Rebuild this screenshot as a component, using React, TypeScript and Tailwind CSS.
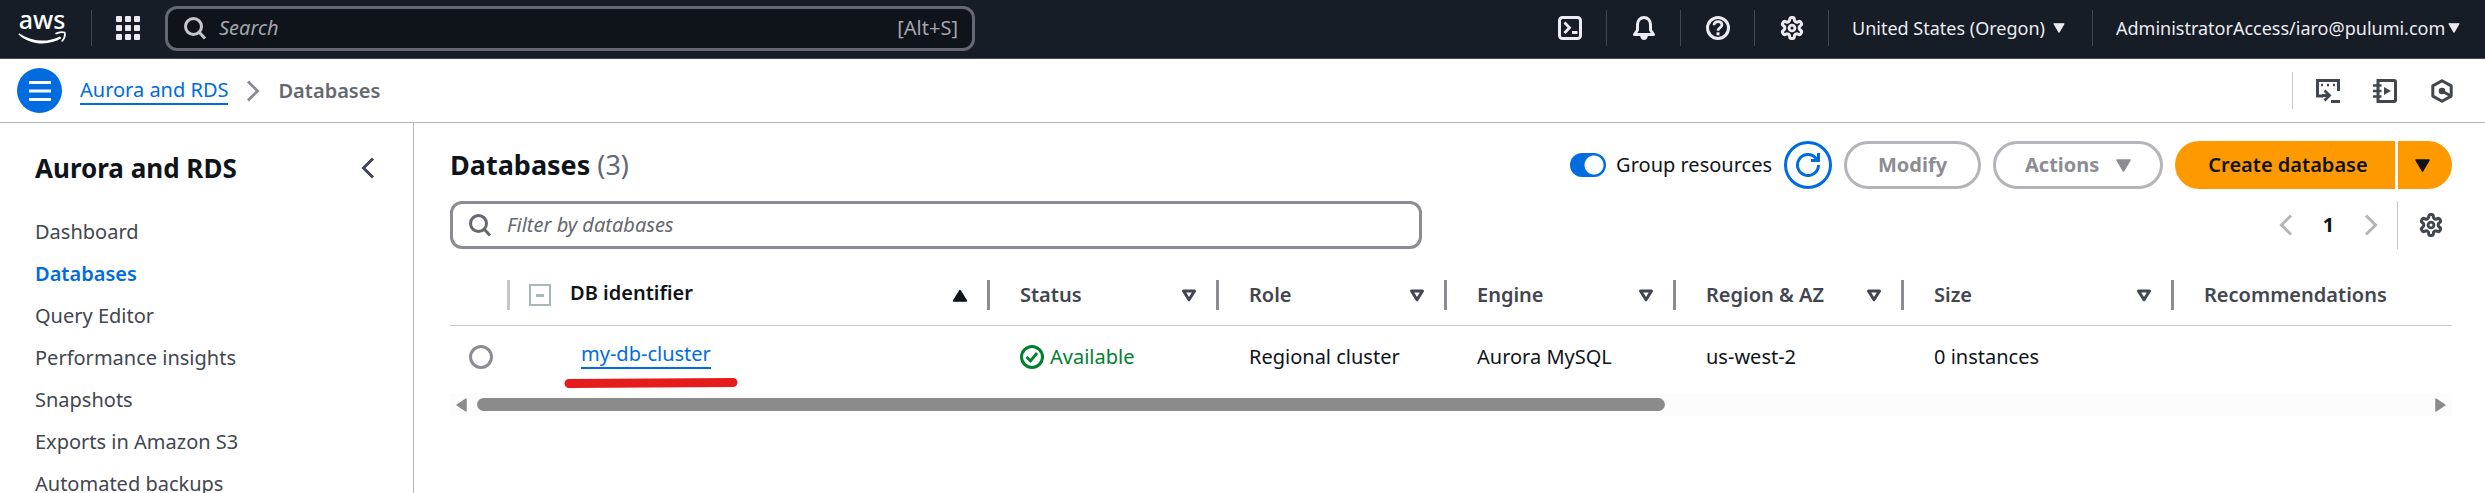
import React from "react";

const GEAR =
  "M12.22 2h-.44a2 2 0 0 0-2 2v.18a2 2 0 0 1-1 1.73l-.43.25a2 2 0 0 1-2 0l-.15-.08a2 2 0 0 0-2.73.73l-.22.38a2 2 0 0 0 .73 2.73l.15.1a2 2 0 0 1 1 1.72v.51a2 2 0 0 1-1 1.74l-.15.09a2 2 0 0 0-.73 2.73l.22.38a2 2 0 0 0 2.73.73l.15-.08a2 2 0 0 1 2 0l.43.25a2 2 0 0 1 1 1.73V20a2 2 0 0 0 2 2h.44a2 2 0 0 0 2-2v-.18a2 2 0 0 1 1-1.73l.43-.25a2 2 0 0 1 2 0l.15.08a2 2 0 0 0 2.73-.73l.22-.39a2 2 0 0 0-.73-2.73l-.15-.08a2 2 0 0 1-1-1.74v-.5a2 2 0 0 1 1-1.74l.15-.09a2 2 0 0 0 .73-2.73l-.22-.38a2 2 0 0 0-2.73-.73l-.15.08a2 2 0 0 1-2 0l-.43-.25a2 2 0 0 1-1-1.73V4a2 2 0 0 0-2-2z";

type IconProps = { children: React.ReactNode; className?: string };

function Icon({ children, className = "" }: IconProps) {
  return (
    <svg
      viewBox="0 0 24 24"
      className={`size-6 shrink-0 ${className}`}
      fill="none"
      stroke="currentColor"
      strokeWidth="3"
      aria-hidden="true"
    >
      {children}
    </svg>
  );
}

const GearIcon = () => (
  <Icon>
    <g transform="translate(12 12) scale(1.05) translate(-12 -12)">
      <path d={GEAR} strokeWidth="2.9" />
      <circle cx="12" cy="12" r="2.8" strokeWidth="2.7" />
    </g>
  </Icon>
);

const SearchIcon = ({ className = "" }: { className?: string }) => (
  <Icon className={className}>
    <circle cx="10.5" cy="10.5" r="8" />
    <path d="M16 16l6 6.5" />
  </Icon>
);

const ChevronRight = ({ className = "" }: { className?: string }) => (
  <Icon className={className}>
    <path d="M7 2.5l9.5 9.5L7 21.5" />
  </Icon>
);

const ChevronLeft = ({ className = "" }: { className?: string }) => (
  <Icon className={className}>
    <path d="M17 2.5L7.5 12l9.5 9.5" />
  </Icon>
);

const CaretDown = ({ className = "" }: { className?: string }) => (
  <svg viewBox="0 0 15 13" className={`shrink-0 ${className}`} aria-hidden="true">
    <path d="M1 1h13L7.5 12z" fill="currentColor" stroke="currentColor" strokeWidth="1.5" strokeLinejoin="round" />
  </svg>
);

const SortAscending = () => (
  <svg viewBox="0 0 16 13" className="h-[13px] w-4 shrink-0 text-[#0f141a]" aria-hidden="true">
    <path d="M1.5 12h13L8 1.5z" fill="currentColor" stroke="currentColor" strokeWidth="1.5" strokeLinejoin="round" />
  </svg>
);

const SortNone = () => (
  <svg viewBox="0 0 16 13" className="h-[13px] w-4 shrink-0" aria-hidden="true">
    <path d="M2.5 2h11L8 10.8z" fill="none" stroke="currentColor" strokeWidth="3" strokeLinejoin="round" />
  </svg>
);

function NavIconButton({ label, children }: { label: string; children: React.ReactNode }) {
  return (
    <button aria-label={label} className="flex h-full w-[74px] items-center justify-center pl-[2px]">
      {children}
    </button>
  );
}

const NavDivider = () => <span className="-mr-px h-9 w-px shrink-0 bg-[#424650]" />;

function TopNav() {
  return (
    <header className="flex h-[59px] items-center border-b border-[#424650] bg-[#161d26] pb-[2px] text-[#ebebf0]">
      <a href="#home" aria-label="AWS home" className="ml-[18px] shrink-0 text-white">
        <svg viewBox="0 -10 48 54" className="h-[54px] w-12" aria-hidden="true">
          <text x="24" y="18" textAnchor="middle" className="font-['Noto_Sans'] text-[25px] font-medium" fill="currentColor">
            aws
          </text>
          <path d="M1 22.2c13 8.6 28 9.6 41 3.2l1.4 1.9C31 35 12 34.4.5 23.4z" fill="currentColor" />
          <path d="M37.5 22.8c3-1.7 6.5-2 9.2-1.3.6 2.8-.6 6.6-3 9" fill="none" stroke="currentColor" strokeWidth="1.7" />
        </svg>
      </a>
      <span className="ml-[25px] h-9 w-px shrink-0 bg-[#424650]" />
      <button aria-label="Services" className="ml-6 grid shrink-0 grid-cols-3 gap-[3px]">
        {Array.from({ length: 9 }, (_, i) => (
          <span key={i} className="size-[6px] rounded-[1px] bg-[#ebebf0]" />
        ))}
      </button>
      <label className="ml-[25px] flex h-[45px] w-full max-w-[810px] items-center rounded-xl border-[3px] border-[#656871] bg-[#0f141a] pr-[14px] pl-[15px]">
        <SearchIcon className="text-[#c6c6cd]" />
        <input
          type="search"
          aria-label="Search"
          placeholder="Search"
          className="ml-3 min-w-0 flex-1 bg-transparent text-xl italic outline-none placeholder:text-[#a4a4ad]"
        />
        <span className="text-xl text-[#a4a4ad]">[Alt+S]</span>
      </label>
      <div className="ml-auto flex h-full shrink-0 items-center">
        <NavIconButton label="CloudShell">
          <Icon>
            <rect x="1.5" y="1.5" width="21" height="21" rx="3" />
            <path d="M6.5 6.500l5 5.300-5 5.200" strokeWidth="2.8" />
            <path d="M14 16.5h5.5" strokeWidth="3" />
          </Icon>
        </NavIconButton>
        <NavDivider />
        <NavIconButton label="Notifications">
          <Icon>
            <path d="M5.500 14V8.500C5.500 4.500 8.300 1.500 12 1.500s6.500 3 6.500 7V14l3 4.500h-19z" strokeLinejoin="round" />
            <path d="M8 19.500h8c-.5 3-2 4.500-4 4.500s-3.500-1.500-4-4.500z" fill="currentColor" stroke="none" />
          </Icon>
        </NavIconButton>
        <NavDivider />
        <NavIconButton label="Support">
          <Icon>
            <circle cx="12" cy="12" r="10.5" />
            <path d="M8 9.200C8 6.900 9.700 5.700 12 5.700s4 1.300 4 3.400c0 2.500-4 2.700-4 5.700" strokeWidth="2.7" />
            <path d="M12 16.300v3" />
          </Icon>
        </NavIconButton>
        <NavDivider />
        <NavIconButton label="Settings">
          <GearIcon />
        </NavIconButton>
        <NavDivider />
        <button className="flex h-full w-[264px] items-center justify-between pr-[27px] pl-6 text-lg">
          United States (Oregon)
          <CaretDown className="h-[10px] w-3" />
        </button>
        <NavDivider />
        <button className="flex h-full w-[393px] items-center justify-between pr-[25px] pl-6 text-lg">
          AdministratorAccess/iaro@pulumi.com
          <CaretDown className="h-[10px] w-3" />
        </button>
      </div>
    </header>
  );
}

function BreadcrumbBar() {
  return (
    <div className="flex h-16 items-center border-b border-[#b4b4bb] pr-[31px] pl-[17px]">
      <button aria-label="Open navigation" className="flex size-[45px] items-center justify-center rounded-full bg-[#006ce0] text-white">
        <Icon>
          <path d="M1 3.5h22M1 12h22M1 20.500h22" />
        </Icon>
      </button>
      <nav aria-label="Breadcrumb" className="ml-[18px] flex items-center text-xl">
        <a href="#rds" className="border-b-2 border-[#006ce0] leading-[26px] text-[#006ce0]">
          Aurora and RDS
        </a>
        <ChevronRight className="mx-[13px] text-[#8c8c94]" />
        <span className="font-semibold text-[#656871]">Databases</span>
      </nav>
      <div className="ml-auto flex items-center text-[#424650]">
        <span className="h-[37px] w-px bg-[#c6c6cd]" />
        <button aria-label="Console tools" className="ml-[23px]">
          <Icon>
            <path d="M22.5 12V1.5h-21v15.5H7" />
            <path d="M5 6h2M11 6h2M17 6h2" strokeWidth="2.5" />
            <path d="M6 16.5h6.5M8.500 11.500l5 5-5 5" strokeWidth="2.8" />
            <path d="M15 22.5h9" />
          </Icon>
        </button>
        <button aria-label="Tutorials" className="ml-[33px]">
          <Icon>
            <path d="M5 1.500h16a1.500 1.500 0 0 1 1.500 1.500v18a1.500 1.500 0 0 1-1.500 1.500H5z" />
            <path d="M0 6.500h8.500M0 12h8.500M0 17.500h8.500" strokeWidth="2.6" />
            <path d="M11 8l7 4-7 4z" fill="currentColor" stroke="none" />
          </Icon>
        </button>
        <button aria-label="Diagnostics" className="ml-[33px]">
          <Icon>
            <path d="M12 1.700l9.200 5.200v10.200L12 22.300l-9.200-5.200V6.900z" strokeLinejoin="round" />
            <circle cx="12" cy="12" r="3.3" fill="currentColor" stroke="none" />
            <path d="M12 12l8 4.500" strokeWidth="2.8" />
          </Icon>
        </button>
      </div>
    </div>
  );
}

const NAV_ITEMS = [
  "Dashboard",
  "Databases",
  "Query Editor",
  "Performance insights",
  "Snapshots",
  "Exports in Amazon S3",
  "Automated backups",
];

function Sidebar() {
  return (
    <aside className="w-[414px] shrink-0 border-r border-[#b4b4bb] pr-7 pl-[35px]">
      <div className="flex h-[88px] items-center justify-between pt-[2px]">
        <h2 className="text-[26px] font-bold">Aurora and RDS</h2>
        <button aria-label="Close navigation" className="mr-[5px] text-[#424650]">
          <ChevronLeft />
        </button>
      </div>
      <nav aria-label="Service">
        <ul className="text-xl text-[#424650]">
          {NAV_ITEMS.map((item) => (
            <li key={item} className="h-[42px] leading-[42px]">
              <a href="#section" className={item === "Databases" ? "font-semibold text-[#006ce0]" : ""}>
                {item}
              </a>
            </li>
          ))}
        </ul>
      </nav>
    </aside>
  );
}

function HeaderActions() {
  return (
    <div className="flex items-center gap-3 text-xl">
      <label className="flex items-center gap-[10px]">
        <input
          type="checkbox"
          role="switch"
          defaultChecked
          className="h-6 w-9 appearance-none rounded-full bg-[#006ce0] bg-[radial-gradient(circle_at_24px_12px,white_9px,transparent_10px)]"
        />
        Group resources
      </label>
      <button aria-label="Refresh" className="flex size-12 items-center justify-center rounded-full border-[3px] border-[#006ce0] text-[#006ce0]">
        <Icon>
          <path d="M22.500 12A10.500 10.500 0 1 1 19.800 5L22 7.500" />
          <path d="M22.500 0v7.500H15" />
        </Icon>
      </button>
      <button disabled className="h-12 w-[137px] rounded-full border-[3px] border-[#b4b4bb] font-bold text-[#8c8c94]">
        Modify
      </button>
      <button disabled className="flex h-12 w-[170px] items-center justify-between rounded-full border-[3px] border-[#b4b4bb] px-[29px] font-bold text-[#8c8c94]">
        Actions
        <CaretDown className="h-[13px] w-[15px]" />
      </button>
      <div className="flex gap-[3px] text-[#0f141a]">
        <button className="h-12 w-[220px] rounded-l-full bg-[#ff9900] pl-[6px] font-semibold">Create database</button>
        <button aria-label="More create options" className="flex h-12 w-[54px] items-center justify-center rounded-r-full bg-[#ff9900] pr-[6px]">
          <CaretDown className="h-[13px] w-[15px]" />
        </button>
      </div>
    </div>
  );
}

function FilterRow() {
  return (
    <div className="mt-3 flex items-center">
      <label className="flex h-12 w-full max-w-[972px] items-center rounded-xl border-[3px] border-[#8c8c94] px-[15px]">
        <SearchIcon className="text-[#656871]" />
        <input
          type="search"
          aria-label="Filter by databases"
          placeholder="Filter by databases"
          className="ml-[15px] min-w-0 flex-1 bg-transparent text-xl italic outline-none placeholder:text-[#656871]"
        />
      </label>
      <div className="ml-auto flex shrink-0 items-center pr-[9px]">
        <button aria-label="Previous page" className="text-[#b4b4bb]">
          <ChevronLeft />
        </button>
        <button className="w-[61px] text-xl font-bold">1</button>
        <button aria-label="Next page" className="text-[#b4b4bb]">
          <ChevronRight />
        </button>
        <span className="ml-[14px] h-12 w-px bg-[#c6c6cd]" />
        <button aria-label="Preferences" className="ml-[21px] text-[#424650]">
          <GearIcon />
        </button>
      </div>
    </div>
  );
}

const COLUMNS = ["Status", "Role", "Engine", "Region & AZ", "Size"];

function DatabaseTable() {
  return (
    <table className="mt-[17px] w-full table-fixed border-collapse text-left text-xl">
      <colgroup>
        <col className="w-[60px]" />
        <col className="w-[480px]" />
        <col className="w-[229px]" />
        <col className="w-[228px]" />
        <col className="w-[229px]" />
        <col className="w-[228px]" />
        <col className="w-[270px]" />
        <col />
      </colgroup>
      <thead className="text-[#424650]">
        <tr className="h-[59px] border-b border-[#c6c6cd]">
          <th aria-label="Selection" className="p-0">
            <div className="ml-auto h-[30px] w-[3px] bg-[#c6c6cd]" />
          </th>
          <th className="p-0">
            <div className="flex items-center pl-[19px] font-semibold text-[#0f141a]">
              <button aria-label="Collapse all" className="flex size-[22px] items-center justify-center border-2 border-[#aab7b8]">
                <span className="h-[3px] w-2 bg-[#aab7b8]" />
              </button>
              <span className="ml-[19px] flex-1 pb-1">DB identifier</span>
              <SortAscending />
              <span className="ml-[19px] h-[30px] w-[3px] bg-[#8c8c94]" />
            </div>
          </th>
          {COLUMNS.map((name) => (
            <th key={name} className="p-0">
              <div className="flex items-center pl-[30px] font-semibold">
                <span className="flex-1">{name}</span>
                <SortNone />
                <span className="ml-[19px] h-[30px] w-[3px] bg-[#8c8c94]" />
              </div>
            </th>
          ))}
          <th className="p-0 pl-[30px] font-semibold">Recommendations</th>
        </tr>
      </thead>
      <tbody>
        <tr className="h-[68px]">
          <td className="p-0 pb-1 pl-[19px]">
            <input
              type="radio"
              name="database"
              aria-label="Select my-db-cluster"
              className="block size-6 appearance-none rounded-full border-[3px] border-[#8c8c94]"
            />
          </td>
          <td className="p-0 pb-2 pl-[71px]">
            <span className="relative block w-fit">
              <a href="#cluster" className="block border-b-2 border-[#006ce0] leading-[26px] text-[#006ce0]">
                my-db-cluster
              </a>
              <svg
                viewBox="0 0 176 12"
                className="absolute top-full -left-[18px] mt-2 h-3 w-44"
                fill="none"
                aria-hidden="true"
              >
                <path d="M6 6.500L170 5.500" stroke="#e61b1b" strokeWidth="9" strokeLinecap="round" />
              </svg>
            </span>
          </td>
          <td className="p-0 pb-1 pl-[30px]">
            <span className="flex items-center gap-[6px] text-[#00802f]">
              <Icon>
                <circle cx="12" cy="12" r="10.5" />
                <path d="M6.500 12l4 4 6.500-8" strokeWidth="2.8" />
              </Icon>
              Available
            </span>
          </td>
          <td className="p-0 pb-1 pl-[30px]">Regional cluster</td>
          <td className="p-0 pb-1 pl-[30px]">Aurora MySQL</td>
          <td className="p-0 pb-1 pl-[30px]">us-west-2</td>
          <td className="p-0 pb-1 pl-[30px]">0 instances</td>
          <td />
        </tr>
      </tbody>
    </table>
  );
}

function ScrollTrack() {
  return (
    <div className="flex h-[23px] items-center justify-between bg-[#fcfcfc] px-[6px] text-[#8b8b8b]">
      <svg viewBox="0 0 11 14" className="h-[14px] w-[11px] shrink-0" aria-hidden="true">
        <path d="M10 1v12L1 7z" fill="currentColor" stroke="currentColor" strokeWidth="1.5" strokeLinejoin="round" />
      </svg>
      <div className="mx-[10px] flex-1">
        <div className="h-[13px] w-[61%] rounded-full bg-[#8b8b8b]" />
      </div>
      <svg viewBox="0 0 11 14" className="h-[14px] w-[11px] shrink-0" aria-hidden="true">
        <path d="M1 1v12l9-6z" fill="currentColor" stroke="currentColor" strokeWidth="1.5" strokeLinejoin="round" />
      </svg>
    </div>
  );
}

export default function App() {
  return (
    <div className="flex h-screen flex-col overflow-hidden bg-white font-['Noto_Sans',sans-serif] text-[#0f141a]">
      <TopNav />
      <BreadcrumbBar />
      <div className="flex flex-1 overflow-hidden">
        <Sidebar />
        <main className="min-w-0 flex-1 pt-[18px] pr-[33px] pl-9">
          <div className="flex items-center justify-between">
            <h1 className="text-[27px] font-bold">
              Databases <span className="font-normal text-[#656871]">(3)</span>
            </h1>
            <HeaderActions />
          </div>
          <FilterRow />
          <DatabaseTable />
          <ScrollTrack />
        </main>
      </div>
    </div>
  );
}
